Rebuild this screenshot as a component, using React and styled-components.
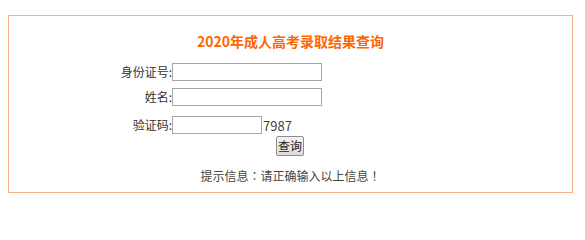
import styled, { createGlobalStyle } from "styled-components"

const Global = createGlobalStyle`
  body {
    margin: 0;
    padding: 15px 8px 0;
    background: #fff;
    font-family: "Noto Sans CJK SC", "Noto Sans", sans-serif;
    color: #333;
  }
`

const Panel = styled.div`
  box-sizing: border-box;
  width: 565px;
  height: 178px;
  border: 1px solid #f8ae88;
  padding-top: 17px;
`

const Title = styled.h3`
  margin: 0 0 14px;
  text-align: center;
  font-size: 14px;
  line-height: 16px;
  font-weight: bold;
  color: #ff6600;
`

const Form = styled.div`
  display: flex;
  flex-direction: column;
  font-size: 12px;
`

const Row = styled.div`
  display: flex;
  align-items: center;
  height: ${p => p.$h || 18}px;
  margin-top: ${p => p.$gap || 0}px;
`

const Label = styled.span`
  width: 163px;
  flex: none;
  text-align: right;
  line-height: 18px;
`

const Input = styled.input`
  box-sizing: border-box;
  width: ${p => p.$w}px;
  height: 18px;
  margin: 0;
  padding: 0 2px;
  border: 1px solid #a6a6a6;
  font-size: 12px;
  outline: none;
`

const Code = styled.span`
  font-size: 13px;
  color: #444;
  margin-left: 1px;
`

const Button = styled.button`
  box-sizing: border-box;
  width: 28px;
  height: 20px;
  margin: 0 0 0 104px;
  padding: 0;
  font-family: inherit;
  font-size: 12px;
  line-height: 16px;
  color: #222;
  border: 1px solid #8f8f8f;
  border-radius: 2px;
  background: linear-gradient(#f4f4f4, #dcdcdc);
`

const Hint = styled.p`
  margin: 13px 0 0;
  text-align: center;
  font-size: 12px;
  line-height: 14px;
  color: #444;
`

const Punct = styled.span`
  font-family: "Noto Sans CJK TC", "Noto Sans CJK SC", sans-serif;
`

export default function App() {
  return (
    <>
      <Global />
      <Panel>
        <Title>2020年成人高考录取结果查询</Title>
        <Form>
          <Row>
            <Label>身份证号:</Label>
            <Input $w={150} />
          </Row>
          <Row $gap={7}>
            <Label>姓名:</Label>
            <Input $w={150} />
          </Row>
          <Row $gap={10}>
            <Label>验证码:</Label>
            <Input $w={90} />
            <Code>7987</Code>
          </Row>
          <Row $gap={2} $h={20}>
            <Label />
            <Button>查询</Button>
          </Row>
        </Form>
        <Hint>提示信息<Punct>：</Punct>请正确输入以上信息<Punct>！</Punct></Hint>
      </Panel>
    </>
  )
}
